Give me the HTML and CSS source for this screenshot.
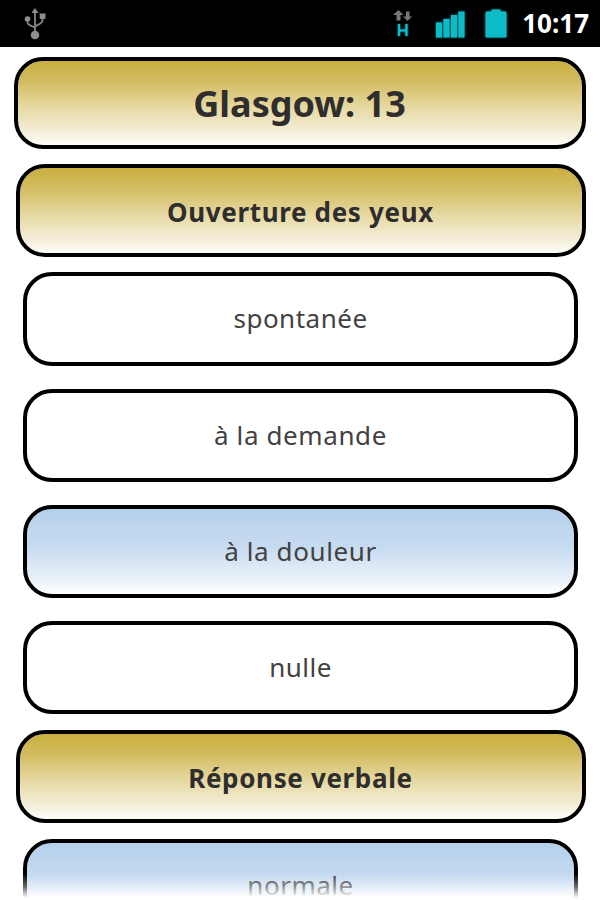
FILE: index.html
```html
<!DOCTYPE html>
<html lang="fr">
<head>
<meta charset="utf-8">
<title>Glasgow</title>
<link rel="stylesheet" href="styles.css">
</head>
<body>
<header class="status">
  <svg class="usb" width="26" height="36" viewBox="0 0 26 36" fill="none" stroke="#858585" stroke-width="1.8">
    <path d="M13 28V6M13 21C12 18.500 5.500 19.500 5.500 15V12M13 20C14 17 20.500 18 20.500 13V10"/>
    <g fill="#8e8e8e" stroke="none"><path d="M13 1L16.500 6H9.500Z"/><circle cx="5.500" cy="12" r="2.800"/><path d="M17.700 6.500h5.800v5.400h-5.800z"/><circle cx="13" cy="28" r="4.300"/></g>
  </svg>
  <svg class="data" width="26" height="32" viewBox="0 0 26 32">
    <path fill="#777" d="M8.500 2l5 5h-3v5.500h-4v-5.500h-3.500zM16 3.500h3.500v5h2.500l-4.500 4.500-4.500-4.500h3z"/>
    <path class="glow" d="M9 16v12M16.500 16v12M9 22.500h7.500" stroke="#0bc0ce" stroke-width="2.200"/>
  </svg>
  <svg class="signal" width="34" height="32" viewBox="0 0 34 32">
    <path class="glow" fill="#0bbcc6" d="M2 15.500h6V30.500h-6zM9.400 12h6.200V30.500h-6.200zM16.900 8h6.200V30.500h-6.200zM24.300 4.500h6.200V30.500h-6.200z"/>
  </svg>
  <svg class="battery" width="26" height="32" viewBox="0 0 26 32">
    <path class="glow" fill="#0bbcc6" d="M8.500 2.500h9v2H22q1.500 0 1.500 1.500V29q0 1.500-1.500 1.500H4Q2.500 30.500 2.500 29V6Q2.500 4.500 4 4.500h4.500z"/>
  </svg>
  <span class="clock">10:17</span>
</header>
<main class="list">
  <h1 class="box score gold"><span>Glasgow: 13</span></h1>
  <h2 class="box section gold"><span>Ouverture des yeux</span></h2>
  <div class="options">
    <div class="box option"><span>spontanée</span></div>
    <div class="box option wide"><span>à la demande</span></div>
    <div class="box option wide selected"><span>à la douleur</span></div>
    <div class="box option"><span>nulle</span></div>
  </div>
  <h2 class="box section gold"><span>Réponse verbale</span></h2>
  <div class="options">
    <div class="box option selected"><span>normale</span></div>
  </div>
</main>
<div class="fade"></div>
</body>
</html>
```

FILE: styles.css
```css
* { box-sizing: border-box; }
body {
  margin: 0;
  height: 900px;
  position: relative;
  overflow: hidden;
  background: #fff;
  color: #2f2d2d;
  font-family: "Noto Sans", "Open Sans", sans-serif;
}
.status {
  height: 47px;
  display: flex;
  align-items: flex-start;
  background: #000;
  padding: 7px 11px 0 22px;
}
.usb { margin-right: 342px; }
.data { margin: 1px 18px 0 0; }
.battery { margin-left: 15px; }
.glow { filter: drop-shadow(0 0 1px #078b96); }
.clock {
  margin-left: auto;
  color: #fff;
  font-size: 26px;
  font-weight: 700;
  line-height: 32px;
}
.list {
  height: 853px;
  overflow: hidden;
  padding: 9.5px 14.500px 0 15.500px;
}
.box {
  display: flex;
  align-items: center;
  justify-content: center;
  height: 93.300px;
  margin: 0;
  border: 4px solid #000;
  border-radius: 29px;
  background: #fff;
  font-size: 26px;
}
.gold { background: linear-gradient(#c9ae3e, #d3bd62 25%, #e6d9a2 55%, #f5efdb 85%, #fdfcf8) padding-box; }
.score { height: 92px; margin: 0 0 15px -2px; padding-top: 2px; font-size: 36px; }
.section { padding-top: 3px; letter-spacing: .65px; }
.options {
  display: grid;
  gap: 23px;
  padding: 15.500px 7.500px;
}
.option { padding-bottom: 1px; color: #424242; letter-spacing: .500px; }
.wide { letter-spacing: .600px; }
.selected { background: linear-gradient(#b4d0eb, #c7dbf0 45%, #e8f0f9 80%, #fff) padding-box; }
.fade {
  position: absolute;
  left: 0;
  right: 0;
  bottom: 0;
  height: 26px;
  background: linear-gradient(rgba(255,255,255,0), rgba(255,255,255,.42) 50%, #fff 92%);
}
```
